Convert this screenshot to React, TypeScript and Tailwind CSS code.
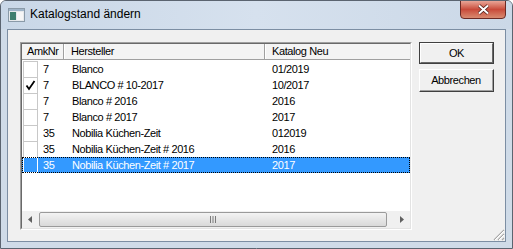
import { useState } from "react";

type Row = { amk: string; hersteller: string; katalog: string; checked: boolean };

const rows: Row[] = [
    { amk: "7", hersteller: "Blanco", katalog: "01/2019", checked: false },
    { amk: "7", hersteller: "BLANCO # 10-2017", katalog: "10/2017", checked: true },
    { amk: "7", hersteller: "Blanco # 2016", katalog: "2016", checked: false },
    { amk: "7", hersteller: "Blanco # 2017", katalog: "2017", checked: false },
    { amk: "35", hersteller: "Nobilia Küchen-Zeit", katalog: "012019", checked: false },
    { amk: "35", hersteller: "Nobilia Küchen-Zeit # 2016", katalog: "2016", checked: false },
    { amk: "35", hersteller: "Nobilia Küchen-Zeit # 2017", katalog: "2017", checked: false },
];

function App() {
    const [selected, setSelected] = useState(6);

    return (
        <div className="w-[513px] h-[249px] bg-[#cfdbe8] border border-[#5b6470] rounded-t-[6px] flex flex-col font-['Liberation_Sans',Arial,sans-serif] text-[11px] tracking-[-0.4px] text-black overflow-hidden">
            {/* title bar */}
            <div className="h-[28px] flex items-start shrink-0 bg-gradient-to-r from-[#c9d7e7] via-[#d6e1ee] to-[#cbd8e7]">
                <div className="pl-[7px] pt-[6px]">{WindowIcon()}</div>
                <div className="pl-[5px] pt-[5px] text-[12px] tracking-normal leading-[16px]">
                    Katalogstand ändern
                </div>
                <div className="ml-auto mr-[6px] w-[46px] h-[19px] -mt-px rounded-b-[4px] border border-[#6b2a24] bg-gradient-to-b from-[#e8a597] via-[#c84a3a] to-[#d88a70] flex items-center justify-center">
                    {CloseIcon()}
                </div>
            </div>

            {/* client area */}
            <div className="mx-[6px] h-[213px] border border-[#7c8ea3] bg-[#f0f0f0] flex pl-[12px] pt-[12px] pr-[11px] relative">
                <div className="w-[392px] h-[188px] border-t border-l border-[#a0a0a0] border-b border-r border-b-white border-r-white flex">
                    <div className="flex-1 border-t border-l border-[#696969] border-b border-r border-b-[#e3e3e3] border-r-[#e3e3e3] bg-white flex flex-col">
                        {/* header */}
                        <div className="h-[16px] flex shrink-0 bg-[#f4f4f4] border-b border-[#a0a0a0] leading-[15px]">
                            <div className="w-[42px] pl-[5px] border-r border-[#a0a0a0] shadow-[1px_0_0_white]">AmkNr</div>
                            <div className="w-[201px] pl-[7px] border-r border-[#a0a0a0] shadow-[1px_0_0_white]">Hersteller</div>
                            <div className="flex-1 pl-[7px]">Katalog Neu</div>
                        </div>
                        {/* rows */}
                        <div className="flex-1 flex flex-col pt-[1px]">
                            {rows.map((r, i) => {
                                const sel = i === selected;
                                return (
                                    <div
                                        key={i}
                                        onClick={() => setSelected(i)}
                                        className={`h-[16px] flex leading-[17px] ${
                                            sel
                                                ? "bg-[#3399ff] text-white outline-1 outline-dotted outline-offset-[-1px] outline-black"
                                                : ""
                                        }`}
                                    >
                                        <div
                                            className={`ml-[1px] w-[15px] h-[16px] border-l border-r border-t flex items-center justify-center ${
                                                sel ? "border-white" : "border-[#c8c8c8]"
                                            } ${i === rows.length - 1 ? "border-b" : ""}`}
                                        >
                                            {r.checked && CheckIcon()}
                                        </div>
                                        <div className="w-[26px] pl-[5px]">{r.amk}</div>
                                        <div className="w-[201px] pl-[8px]">{r.hersteller}</div>
                                        <div className="flex-1 pl-[7px]">{r.katalog}</div>
                                    </div>
                                );
                            })}
                        </div>
                        {/* horizontal scrollbar */}
                        <div className="h-[17px] flex shrink-0 bg-[#f0f0f0]">
                            <div className="w-[17px] flex items-center justify-center">{ArrowLeft()}</div>
                            <div className="w-[348px] my-px rounded-[2px] border border-[#9a9a9a] bg-gradient-to-b from-[#f3f3f3] to-[#d9d9d9] flex items-center justify-center">
                                {Grip()}
                            </div>
                            <div className="flex-1" />
                            <div className="w-[17px] flex items-center justify-center">{ArrowRight()}</div>
                        </div>
                    </div>
                </div>

                {/* buttons */}
                <div className="ml-auto flex flex-col gap-[5px]">
                    <button className="w-[75px] h-[22px] border border-[#404040] bg-[#f0f0f0] flex">
                        <span className="flex-1 border-t border-l border-white border-b border-r border-b-[#696969] border-r-[#696969] leading-[18px] text-center">
                            OK
                        </span>
                    </button>
                    <button className="w-[75px] h-[23px] border-t border-l border-white border-b border-r border-b-[#404040] border-r-[#404040] bg-[#f0f0f0] flex">
                        <span className="flex-1 border-b border-r border-b-[#a0a0a0] border-r-[#a0a0a0] leading-[20px] text-center">
                            Abbrechen
                        </span>
                    </button>
                </div>

                {/* size grip */}
                <div className="absolute right-0 bottom-0">{SizeGrip()}</div>
            </div>
        </div>
    );
}

const WindowIcon = () => (
    <svg width="17" height="16" viewBox="0 0 17 16">
        <rect x="0.5" y="1.5" width="16" height="13" fill="#e6e9ec" stroke="#8a9aa8" />
        <rect x="1" y="2" width="15" height="2" fill="#9fb4c8" />
        <rect x="2" y="5" width="6" height="8" fill="#3f7f6f" />
        <rect x="9" y="5" width="6" height="8" fill="#f6f6f6" />
    </svg>
);

const CloseIcon = () => (
    <svg width="13" height="11" viewBox="0 0 13 11">
        <path d="M2 1.5 L11 9.5 M11 1.5 L2 9.5" stroke="#4a1a14" strokeWidth="3.4" />
        <path d="M2 1.5 L11 9.5 M11 1.5 L2 9.5" stroke="white" strokeWidth="2" />
    </svg>
);

const CheckIcon = () => (
    <svg width="11" height="11" viewBox="0 0 11 11">
        <path d="M1.5 5.5 L4 9 L9.5 1" stroke="black" strokeWidth="1.8" fill="none" />
    </svg>
);

const ArrowLeft = () => (
    <svg width="5" height="7" viewBox="0 0 5 7">
        <path d="M4 0 L0 3.5 L4 7 Z" fill="#606060" />
    </svg>
);

const ArrowRight = () => (
    <svg width="5" height="7" viewBox="0 0 5 7">
        <path d="M1 0 L5 3.5 L1 7 Z" fill="#606060" />
    </svg>
);

const Grip = () => (
    <svg width="8" height="7" viewBox="0 0 8 7">
        <path d="M1.5 0 V7 M4 0 V7 M6.5 0 V7" stroke="#7a7a7a" strokeWidth="1" />
    </svg>
);

const SizeGrip = () => (
    <svg width="14" height="14" viewBox="0 0 14 14">
        <path d="M13 3 L3 13 M13 7 L7 13 M13 11 L11 13" stroke="#a8a8a8" strokeWidth="1.2" />
        <path d="M13 4 L4 13 M13 8 L8 13" stroke="white" strokeWidth="1" />
    </svg>
);

export default App;
